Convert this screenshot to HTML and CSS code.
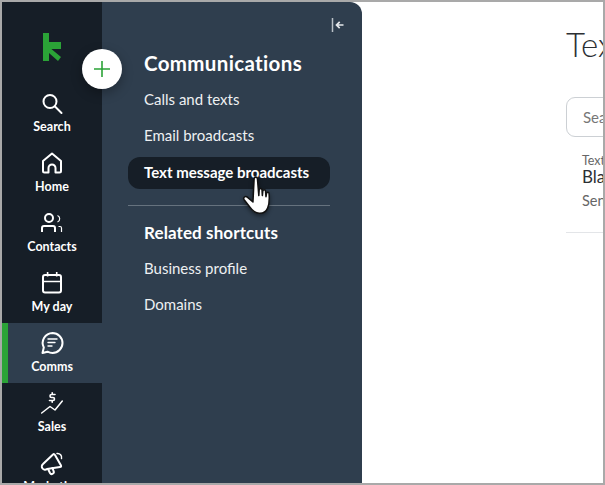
FILE: index.html
```html
<!DOCTYPE html>
<html lang="en">
<head>
<meta charset="utf-8">
<title>Text message broadcasts</title>
<link rel="stylesheet" href="styles.css">
</head>
<body>
<div class="frame">
  <nav class="rail">
    <div class="logo">
      <svg width="18" height="28" viewBox="0 0 18 28"><path d="M0 0h6v28H0z M6 9h12v7H6z M6 14l12 10-3 4-9-8z" fill="#2ba337"/></svg>
    </div>
    <a class="item">
      <svg class="ico" width="24" height="24" viewBox="0 0 24 24" fill="none" stroke="#fff" stroke-width="2" stroke-linecap="round"><circle cx="10" cy="9.500" r="6.500"/><path d="M15 14.500l6.500 6.500"/></svg>
      <span>Search</span>
    </a>
    <a class="item">
      <svg class="ico" width="24" height="24" viewBox="0 0 24 24" fill="none" stroke="#fff" stroke-width="2" stroke-linejoin="round"><path d="M3 9 12 1.500 21 9v10a1.500 1.500 0 0 1-1.500 1.500h-4V16a3.500 3.500 0 0 0-7 0v4.500h-4A1.500 1.500 0 0 1 3 19z"/></svg>
      <span>Home</span>
    </a>
    <a class="item">
      <svg class="ico" width="24" height="24" viewBox="0 0 24 24" fill="none" stroke="#fff" stroke-width="2"><circle cx="9" cy="6" r="4"/><path d="M2 20v-4a2 2 0 0 1 2-2h9a2 2 0 0 1 2 2v4"/><path d="M17.500 3.500a3.500 3.500 0 0 1 0 6.500M18.500 14.500h1.500a1.500 1.500 0 0 1 1.500 1.500v4" stroke-width="1.200"/></svg>
      <span>Contacts</span>
    </a>
    <a class="item">
      <svg class="ico" width="24" height="24" viewBox="0 0 24 24" fill="none" stroke="#fff" stroke-width="2"><rect x="3" y="3" width="18" height="17.500" rx="2"/><path d="M3 9.500h18" stroke-width="1.500"/><path d="M7.600 0v4.500M16.700 0v4.500" stroke-width="1.600"/></svg>
      <span>My day</span>
    </a>
    <a class="item active">
      <svg class="ico" width="24" height="24" viewBox="0 0 24 24" fill="none" stroke="#fff" stroke-width="2" stroke-linecap="round" stroke-linejoin="round"><path d="M12.500 1a10 10 0 0 1 0 20c-1.800 0-3.500-.5-5-1.300L2.500 21l1.300-5.500A10 10 0 0 1 12.500 1z"/><path d="M8 7h9M8 10.500h7M8 14h4" stroke-width="1.400"/></svg>
      <span>Comms</span>
    </a>
    <a class="item">
      <svg class="ico" width="24" height="24" viewBox="0 0 24 24" fill="none" stroke="#fff" stroke-width="2" stroke-linecap="round" stroke-linejoin="round"><path d="M1.700 21 10 14.500l5 3.500 7.300-9" stroke-width="1.500"/><path d="M15 2.500h-3.500a1.500 1.500 0 0 0 0 3h1.500a1.500 1.500 0 0 1 0 3H9.500M12.200 .8v1.200M12.200 9v1.200" stroke-width="1.600"/></svg>
      <span>Sales</span>
    </a>
    <a class="item">
      <svg class="ico" width="24" height="24" viewBox="0 0 24 24" fill="none" stroke="#fff" stroke-width="2" stroke-linecap="round" stroke-linejoin="round"><path d="M3 12 13 2.500q1.200-1 2 .5l6 10.500q.5 1.500-1 1.500L7 17a3 3 0 0 1-4-5z"/><path d="M8 17l2 4a2 2 0 0 0 3.500-2l-1-3"/><path d="M17 1.500a4 4 0 0 1 4.500 5" stroke-width="1.500"/></svg>
      <span>Marketing</span>
    </a>
  </nav>

  <aside class="panel">
    <div class="collapse">
      <svg width="14" height="14" viewBox="0 0 14 14" fill="none" stroke="#e6e9ec"><path d="M1.500 0v14" stroke-width="1.500" stroke="#b9c0c7"/><path d="M12.500 7H5.500M8.700 3.800 5.500 7l3.200 3.200" stroke-width="1.700"/></svg>
    </div>
    <h2 class="heading">Communications</h2>
    <ul class="links">
      <li class="link">Calls and texts</li>
      <li class="link">Email broadcasts</li>
      <li class="link current">Text message broadcasts</li>
    </ul>
    <hr class="rule">
    <h3 class="subheading">Related shortcuts</h3>
    <ul class="links">
      <li class="link">Business profile</li>
      <li class="link">Domains</li>
    </ul>
  </aside>

  <main class="main">
    <h1 class="title">Text message broadcasts</h1>
    <div class="search">Search text message broadcasts</div>
    <div class="row">
      <div class="row-kicker">Text message broadcast</div>
      <div class="row-name">Black Friday sale announcement</div>
      <div class="row-meta">Sent to all contacts on Friday</div>
    </div>
  </main>

  <button class="add" aria-label="Add">
    <svg width="16" height="16" viewBox="0 0 16 16" stroke="#2ba337" stroke-width="1.600"><path d="M8 0v16M0 8h16"/></svg>
  </button>

  <svg class="hand" width="38" height="47" viewBox="0 0 32 40">
    <path d="M11 3c0-1.600 2.600-1.600 2.800 0l1.200 14.500 .3-5c.2-1.300 2.200-1.300 2.400 0l.3 5 .4-4c.2-1.300 2.100-1.300 2.300 0l.4 5 .5-3c.3-1.200 2-1.100 2.100.2.400 4.500.3 9-1.200 12.500-1.300 3-4 4.600-7.200 4.400-3.500-.2-5.600-2-7.500-4.800L2.500 21c-1.200-1.800 1-3.600 2.700-2.200l4.800 4.200z" fill="#fff" stroke="#111" stroke-width="1.300" stroke-linejoin="round"/>
  </svg>
</div>
</body>
</html>
```

FILE: styles.css
```css
* { box-sizing: border-box; }
html, body { margin: 0; padding: 0; }
body { width: 605px; height: 485px; overflow: hidden; font-family: "Lato", "Liberation Sans", sans-serif; }
.frame {
  position: relative;
  display: flex;
  width: 605px;
  height: 485px;
  border: 2px solid #a9a9a9;
  overflow: hidden;
  background: #fff;
}
.rail {
  width: 100px;
  flex: none;
  background: #161e27;
  display: flex;
  flex-direction: column;
  overflow: hidden;
}
.logo { height: 81px; flex: none; padding: 31px 0 0 41px; }
.item {
  height: 60px;
  flex: none;
  display: flex;
  flex-direction: column;
  align-items: center;
  color: #fff;
  font-size: 12.500px;
  font-weight: 700;
  line-height: 16px;
}
.item .ico { margin-top: 9px; height: 24px; flex: none; }
.item span { margin-top: 3px; }
.item.active { background: #2f3e4e; border-left: 6px solid #2ba337; padding-right: 6px; }
.panel {
  width: 260px;
  flex: none;
  background: #2f3e4e;
  border-radius: 0 12px 0 0;
  padding: 0 32px 0 26px;
  color: #fff;
  position: relative;
}
.collapse { position: absolute; top: 16px; right: 17px; line-height: 0; }
.heading { margin: 47px 0 0 16px; font-size: 20.500px; letter-spacing: .35px; line-height: 28px; font-weight: 700; }
.links { list-style: none; margin: 0; padding: 0; }
.link {
  height: 32px;
  margin-top: 4px;
  padding-left: 16px;
  font-size: 15px;
  line-height: 32px;
  color: #eef0f2;
  border-radius: 12px;
}
.heading + .links { margin-top: 6px; }
.current { margin-top: 6px; line-height: 30px; background: #161e27; font-weight: 700; color: #fff; }
.rule { margin: 16px 0 0; border: 0; border-top: 1px solid #66727e; }
.subheading { margin: 13px 0 0 16px; font-size: 17px; letter-spacing: .1px; line-height: 28px; font-weight: 700; }
.subheading + .links { margin-top: 5px; }
.main { flex: 1; min-width: 0; padding-left: 204px; overflow: hidden; white-space: nowrap; }
.title { margin: 22px 0 0; font-size: 33px; line-height: 40px; font-weight: 300; color: #2c2f33; }
.search {
  margin-top: 33px;
  width: 300px;
  height: 40px;
  border: 1px solid #ccd0d4;
  border-radius: 9px;
  padding-left: 16px;
  line-height: 38px;
  font-size: 15px;
  color: #777;
}
.row { margin-top: 17px; padding: 0 0 0 16px; width: 300px; height: 79px; border-bottom: 1px solid #e3e5e8; }
.row-kicker { font-size: 12.500px; line-height: 13px; color: #666; }
.row-name { font-size: 17px; line-height: 19px; color: #2c2f33; }
.row-meta { margin-top: 5px; font-size: 14.500px; line-height: 20px; color: #666; }
.add {
  position: absolute;
  left: 80px;
  top: 47px;
  width: 40px;
  height: 40px;
  padding: 0;
  border: 0;
  border-radius: 50%;
  background: #fff;
  box-shadow: 0 4px 12px rgba(0, 0, 0, .3);
  display: flex;
  align-items: center;
  justify-content: center;
}
.hand { position: absolute; left: 239px; top: 173px; filter: drop-shadow(0 2px 2px rgba(0, 0, 0, .45)); }
```
